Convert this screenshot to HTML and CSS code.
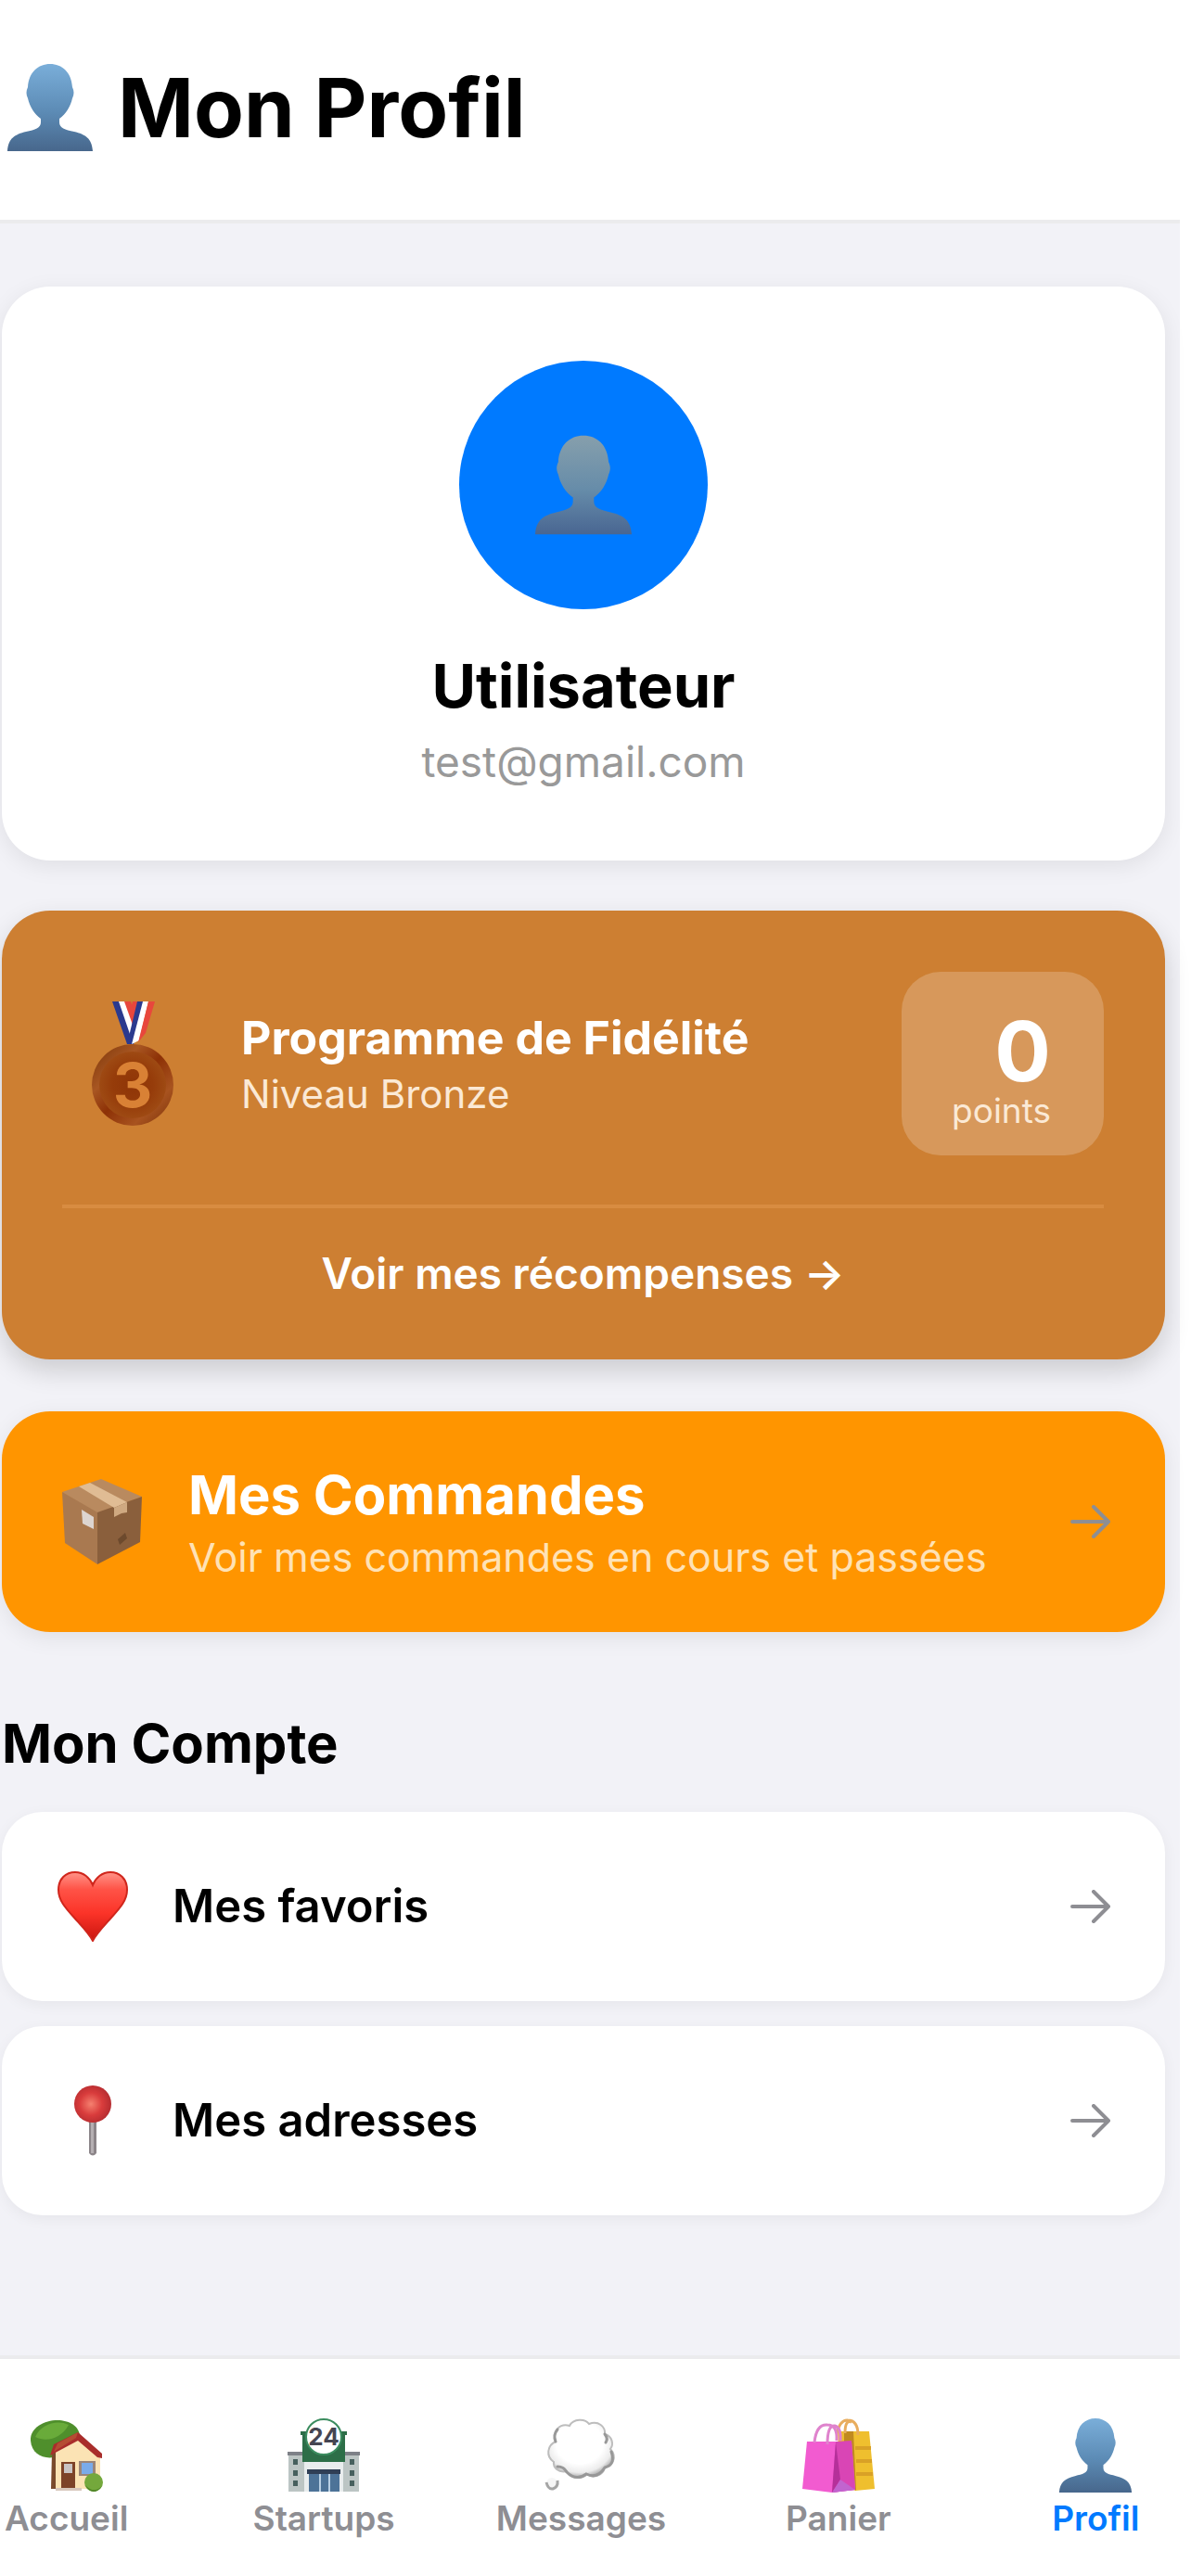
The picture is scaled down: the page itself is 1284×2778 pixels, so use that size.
FILE: index.html
```html
<!DOCTYPE html>
<html lang="fr">
<head>
<meta charset="utf-8">
<meta name="viewport" content="width=device-width, initial-scale=1">
<title>Mon Profil</title>
<link rel="stylesheet" href="styles.css">
</head>
<body>
<svg class="defs" aria-hidden="true">
  <defs>
    <linearGradient id="blue" x1="0" y1="0" x2="0" y2="1"><stop offset="0" stop-color="#7aaed9"/><stop offset=".55" stop-color="#5c8bb5"/><stop offset="1" stop-color="#47678c"/></linearGradient>
    <linearGradient id="slate" x1="0" y1="0" x2="0" y2="1"><stop offset="0" stop-color="#869fac"/><stop offset=".55" stop-color="#668ca9"/><stop offset="1" stop-color="#496692"/></linearGradient>
    <symbol id="person" viewBox="0 0 92 94"><path d="M0 94C1 80 8 76 20 73C30 71 36 69 36 63V59C29 54 24 46 22 37C20 33 20 29 22 25C23 9 33 0 46 0S69 9 70 25C72 29 72 33 70 37C68 46 63 54 56 59V63C56 69 62 71 72 73C84 76 91 80 92 94Z"/></symbol>
    <symbol id="arrow" viewBox="0 0 44 36"><path d="M2 18H41M25 2L41 18L25 34" fill="none" stroke="currentColor" stroke-width="4" stroke-linecap="round" stroke-linejoin="round"/></symbol>
  </defs>
</svg>

<div class="app">
  <header class="header">
    <svg class="header-icon" fill="url(#blue)" aria-hidden="true"><use href="#person"/></svg>
    <h1 class="header-title">Mon Profil</h1>
  </header>

  <main class="main">
    <section class="card user">
      <div class="avatar"><svg class="avatar-icon" fill="url(#slate)" aria-hidden="true"><use href="#person"/></svg></div>
      <h2 class="user-name">Utilisateur</h2>
      <p class="user-mail">test@gmail.com</p>
    </section>

    <section class="card loyalty">
      <div class="loyalty-row">
        <svg class="medal" viewBox="0 0 88 134" aria-hidden="true">
          <defs><radialGradient id="bronze" cx=".5" cy=".5" r=".5"><stop offset="0" stop-color="#8f3507"/><stop offset=".6" stop-color="#963c0a"/><stop offset="1" stop-color="#9e4a13"/></radialGradient>
          <linearGradient id="shine" x1="0" y1="0" x2="1" y2="1"><stop offset="0" stop-color="#7b3508"/><stop offset=".3" stop-color="#a85622"/><stop offset=".5" stop-color="#8d3106"/><stop offset=".75" stop-color="#a8531f"/><stop offset="1" stop-color="#7b3008"/></linearGradient></defs>
          <path d="M44 0H50L41 40L37 26Z" fill="#e8473c"/>
          <path d="M22 0H30L44 32V46H38Z" fill="#2b3a8e"/><path d="M29 0H36L46 28L42 38Z" fill="#fff"/><path d="M35 0H42L48 20L45 28Z" fill="#e8473c"/>
          <path d="M49 0H56L45 46H38Z" fill="#2b3a8e"/><path d="M55 0H61L51 42L43 46Z" fill="#fff"/><path d="M61 0H68L58 34L50 44Z" fill="#e8473c"/>
          <ellipse cx="44" cy="90" rx="44" ry="44" fill="url(#shine)"/>
          <circle cx="44" cy="90" r="36" fill="url(#bronze)"/>
          <text x="44" y="114" class="medal-digit">3</text>
        </svg>
        <div class="loyalty-text">
          <h2 class="loyalty-title">Programme de Fidélité</h2>
          <p class="loyalty-level">Niveau Bronze</p>
        </div>
        <div class="points"><span class="points-value">0</span><span class="points-label">points</span></div>
      </div>
      <a class="loyalty-link" href="#recompenses">Voir mes récompenses →</a>
    </section>

    <a class="card orders" href="#commandes">
      <svg class="parcel" viewBox="0 0 86 92" aria-hidden="true">
        <path d="M42 0L86 19L38 38L0 14Z" fill="#b98a5f"/>
        <path d="M0 14L38 36V92L3 69Z" fill="#a97950"/>
        <path d="M38 36L86 19L84 68L38 92Z" fill="#8a5f3c"/>
        <path d="M18 8L30 4L70 25L56 31Z" fill="#e0bc94"/>
        <path d="M56 31L70 25V36L64 37L56 41Z" fill="#cfa981"/>
        <path d="M21 33L34 41V54L22 48Z" fill="#ddd5d0"/>
        <path d="M60 65L68 58L70 64L62 71Z" fill="#6d4a2d"/>
      </svg>
      <span class="orders-text">
        <span class="orders-title">Mes Commandes</span>
        <span class="orders-sub">Voir mes commandes en cours et passées</span>
      </span>
      <svg class="arrow" aria-hidden="true"><use href="#arrow"/></svg>
    </a>

    <h2 class="section-title">Mon Compte</h2>
    <nav class="menu" aria-label="Mon Compte">
      <a class="card item" href="#favoris">
        <svg class="item-icon" viewBox="0 0 76 76" aria-hidden="true">
          <defs><linearGradient id="heart" x1="0" y1="0" x2="0" y2="1"><stop offset="0" stop-color="#ff9489"/><stop offset=".25" stop-color="#ff5347"/><stop offset=".6" stop-color="#fb3328"/><stop offset="1" stop-color="#c9160f"/></linearGradient></defs>
          <path d="M38 75C34 67 27 60 18 50C8 39 1 31 1 20C1 8 9 1 19 1C28 1 35 7 38 15C41 7 48 1 57 1C67 1 75 8 75 20C75 31 68 39 58 50C49 60 42 67 38 75Z" fill="url(#heart)" stroke="#d0261c" stroke-width="2"/>
        </svg>
        <span class="item-label">Mes favoris</span>
        <svg class="arrow" aria-hidden="true"><use href="#arrow"/></svg>
      </a>
      <a class="card item" href="#adresses">
        <svg class="item-icon" viewBox="0 0 76 76" aria-hidden="true">
          <defs><radialGradient id="pin" cx=".45" cy=".5" r=".55"><stop offset="0" stop-color="#f5806f"/><stop offset=".55" stop-color="#d93c3c"/><stop offset="1" stop-color="#b52c30"/></radialGradient></defs>
          <path d="M34 38H42V73Q38 78 34 73Z" fill="#8c8589"/><path d="M36 38H39V73H36Z" fill="#b5afb2"/>
          <ellipse cx="38" cy="20" rx="20" ry="20" fill="url(#pin)"/>
        </svg>
        <span class="item-label">Mes adresses</span>
        <svg class="arrow" aria-hidden="true"><use href="#arrow"/></svg>
      </a>
    </nav>
  </main>

  <nav class="tabbar" aria-label="Navigation principale">
    <div class="tabs">
      <a class="tab" href="#accueil">
        <svg class="tab-icon" viewBox="0 0 80 80" aria-hidden="true">
          <path d="M1 24C0 10 16 2 30 2C42 2 54 8 54 20L26 42C14 44 2 38 1 24Z" fill="#4f8f2c"/>
          <path d="M6 20C12 6 30 1 42 7C34 22 18 26 6 20Z" fill="#69ab3a"/>
          <path d="M24 37L52 20L76 42V76H24Z" fill="#fbe3b4"/>
          <path d="M24 37L28 35V76H23Z" fill="#7a4a2c"/>
          <path d="M22 40L26 28L52 15L78 38V43L73 42L52 24Z" fill="#a92d2b"/>
          <path d="M30 27L52 15L50 21L26 36Z" fill="#b54d33"/>
          <rect x="34" y="47" width="15" height="29" fill="#7d4328"/><rect x="37" y="49" width="9" height="10" fill="#c9c4c4"/>
          <rect x="53" y="46" width="18" height="16" fill="#9c8578"/><rect x="56" y="48" width="12" height="12" fill="#7aabea"/>
          <circle cx="69" cy="69" r="10" fill="#74a83c"/><path d="M60 72Q69 82 78 73Q74 79 69 79Q63 79 60 72Z" fill="#4f8425"/>
          <path d="M28 75H56V78H28Z" fill="#d8c8bc"/>
        </svg>
        <span class="tab-label">Accueil</span>
      </a>
      <a class="tab" href="#startups">
        <svg class="tab-icon" viewBox="0 0 80 80" aria-hidden="true">
          <path d="M2 38H78V79H2Z" fill="#bcc5c4"/><path d="M1 36H79V40H1Z" fill="#7e8188"/>
          <path d="M17 15H63V47H17Z" fill="#2d6e48"/><path d="M15 14H23V18H15ZM57 14H65V18H57Z" fill="#2d6e48"/>
          <path d="M19 47H61V79H19Z" fill="#e9edee"/><path d="M22 55H58V60H22Z" fill="#303f56"/><path d="M24 60H57V79H24Z" fill="#4d7398"/><path d="M35 60H37V79H35ZM45 60H47V79H45Z" fill="#b9d0e4"/>
          <path d="M7 44H12V50H7ZM7 56H12V62H7ZM7 67H12V73H7ZM68 44H73V50H68ZM68 56H73V62H68ZM68 67H73V73H68Z" fill="#47605e"/>
          <circle cx="40" cy="20" r="19" fill="#fff" stroke="#3b8c5f" stroke-width="2"/>
          <text x="40" y="29" class="store-digits">24</text>
        </svg>
        <span class="tab-label">Startups</span>
      </a>
      <a class="tab" href="#messages">
        <svg class="tab-icon" viewBox="0 0 80 80" aria-hidden="true">
          <defs><radialGradient id="cloud" cx=".48" cy=".4" r=".6"><stop offset=".6" stop-color="#fff"/><stop offset=".85" stop-color="#ececec"/><stop offset="1" stop-color="#a9a9a9"/></radialGradient></defs>
          <path d="M13 25C9 13 18 5 28 8C32 0 45 0 49 6C59 2 67 9 66 17C74 19 76 28 72 33C80 42 74 52 66 53C64 62 53 65 47 60C40 67 28 64 25 57C16 59 10 53 11 47C2 41 4 29 13 25Z" fill="url(#cloud)" stroke="#bdbdbd" stroke-width="2"/>
          <path d="M15 52Q22 52 25 58Q35 68 46 60Q58 66 66 53M66 53Q78 50 73 36M66 17Q70 22 67 26M13 25Q10 18 15 12" fill="none" stroke="#989898" stroke-width="3" stroke-linecap="round"/>
          <circle cx="9" cy="70" r="6" fill="#f6f6f6"/><path d="M3 69Q5 77 10 76Q16 74 15 67" fill="none" stroke="#a5a5a5" stroke-width="3"/>
        </svg>
        <span class="tab-label">Messages</span>
      </a>
      <a class="tab" href="#panier">
        <svg class="tab-icon" viewBox="0 0 80 80" aria-hidden="true">
          <path d="M39 14H73L79 76L58 78L42 70Z" fill="#efbf2e"/><path d="M56 14L59 78L46 66V14Z" fill="#c08a20"/><path d="M58 32H75M59 46H76M59 60H77" stroke="#d9a126" stroke-width="4"/>
          <path d="M38 16Q42 1 50 2Q61 2 61 18M47 16Q47 1 54 4" fill="none" stroke="#e8ad5e" stroke-width="3"/>
          <path d="M6 25H54L58 77L33 80L1 76Z" fill="#f25bd0"/><path d="M37 25L54 24L58 77L33 80Z" fill="#d945b5"/><path d="M37 26L42 66L33 80Z" fill="#b5309a"/><path d="M42 66L58 77L33 80Z" fill="#c164cf"/>
          <path d="M14 26Q16 6 28 7Q39 7 38 24M28 28Q28 7 36 8Q43 10 42 24" fill="none" stroke="#df83cd" stroke-width="3"/>
        </svg>
        <span class="tab-label">Panier</span>
      </a>
      <a class="tab tab-active" href="#profil" aria-current="page">
        <svg class="tab-icon" fill="url(#blue)" aria-hidden="true"><use href="#person"/></svg>
        <span class="tab-label">Profil</span>
      </a>
    </div>
  </nav>
</div>
</body>
</html>
```

FILE: styles.css
```css
* { box-sizing: border-box; margin: 0; padding: 0; }

body {
  background: #fff;
  color: #000;
  font-family: Inter, "Liberation Sans", sans-serif;
}

a { color: inherit; text-decoration: none; }
svg { display: block; flex: none; }
.defs { position: absolute; width: 0; height: 0; }

.app {
  display: flex;
  flex-direction: column;
  min-height: 100vh;
  margin-right: 12px;
  background: #f2f2f7;
}

/* Header */
.header {
  display: flex;
  align-items: center;
  gap: 27px;
  padding: 64px 8px 69px;
  background: #fff;
  border-bottom: 4px solid #ebebed;
}
.header-icon { width: 92px; height: 94px; }
.header-title { font-size: 88px; line-height: 104px; font-weight: 700; }

/* Cards */
.main {
  flex: 1;
  display: flex;
  flex-direction: column;
  padding: 68px 16px 0 2px;
}
.card {
  background: #fff;
  border-radius: 52px;
  box-shadow: 0 6px 24px rgba(0, 0, 0, .08);
}

.user {
  display: flex;
  flex-direction: column;
  align-items: center;
  padding: 80px 64px;
}
.avatar {
  display: grid;
  place-items: center;
  width: 268px;
  height: 268px;
  border-radius: 50%;
  background: #007aff;
}
.avatar-icon { width: 104px; height: 108px; }
.user-name { margin-top: 45px; font-size: 65px; line-height: 76px; font-weight: 700; }
.user-mail { margin-top: 16px; font-size: 46px; line-height: 54px; color: #999; }

.loyalty {
  margin-top: 54px;
  padding: 66px 66px 66px 65px;
  background: #cd7f32;
  color: #fff;
  box-shadow: 0 12px 28px rgba(0, 0, 0, .16);
}
.loyalty-row { display: flex; align-items: center; }
.medal { width: 88px; height: 134px; margin: 0 73px 0 32px; }
.medal-digit { font-size: 66px; font-weight: 700; fill: #d98135; text-anchor: middle; }
.loyalty-text { flex: 1; }
.loyalty-title { font-size: 50px; line-height: 60px; font-weight: 700; }
.loyalty-level { margin-top: 6px; font-size: 42px; line-height: 50px; color: #fbe9d5; }
.points {
  display: flex;
  flex-direction: column;
  align-items: flex-end;
  padding: 42px 57px 28px 54px;
  border-radius: 42px;
  background: rgba(255, 255, 255, .2);
}
.points-value { font-size: 90px; line-height: 88px; font-weight: 700; }
.points-label { font-size: 37px; line-height: 40px; color: #fbe9d5; }
.loyalty-link {
  display: block;
  margin-top: 53px;
  padding-top: 43px;
  border-top: 4px solid #d88c41;
  font-size: 46px;
  line-height: 54px;
  font-weight: 600;
  text-align: center;
}

.orders {
  display: flex;
  align-items: center;
  margin-top: 56px;
  padding: 56px 58px 56px 65px;
  background: #ff9500;
  color: #fff;
}
.parcel { width: 86px; height: 92px; margin-right: 50px; }
.orders-text { flex: 1; display: flex; flex-direction: column; gap: 8px; }
.orders-title { font-size: 58px; line-height: 68px; font-weight: 700; }
.orders-sub { font-size: 43px; line-height: 50px; color: #ffe2b5; }

.arrow { width: 44px; height: 36px; color: #8e8e93; }

/* Account menu */
.section-title { margin-top: 86px; font-size: 58px; line-height: 68px; font-weight: 700; }
.menu { display: flex; flex-direction: column; gap: 27px; margin-top: 40px; }
.item {
  display: flex;
  align-items: center;
  padding: 73px 58px 73px 60px;
  border-radius: 44px;
  box-shadow: 0 4px 16px rgba(0, 0, 0, .05);
}
.item-icon { width: 76px; height: 76px; margin: -9px 48px -9px 0; }
.item-label { flex: 1; font-size: 49px; line-height: 58px; font-weight: 600; }

/* Tab bar */
.tabbar {
  overflow: hidden;
  padding: 64px 0 40px;
  background: #fff;
  border-top: 4px solid #ebebed;
}
.tabs {
  display: grid;
  grid-template-columns: repeat(5, 1fr);
  margin: 0 -48px 0 -67px;
}
.tab {
  display: flex;
  flex-direction: column;
  align-items: center;
  gap: 6px;
  color: #8e8e93;
}
.tab-active { color: #007aff; }
.tab-icon { width: 80px; height: 80px; }
.tab-label { font-size: 37px; line-height: 44px; font-weight: 600; }
.store-digits { font-size: 26px; font-weight: 700; fill: #454552; text-anchor: middle; }
```
